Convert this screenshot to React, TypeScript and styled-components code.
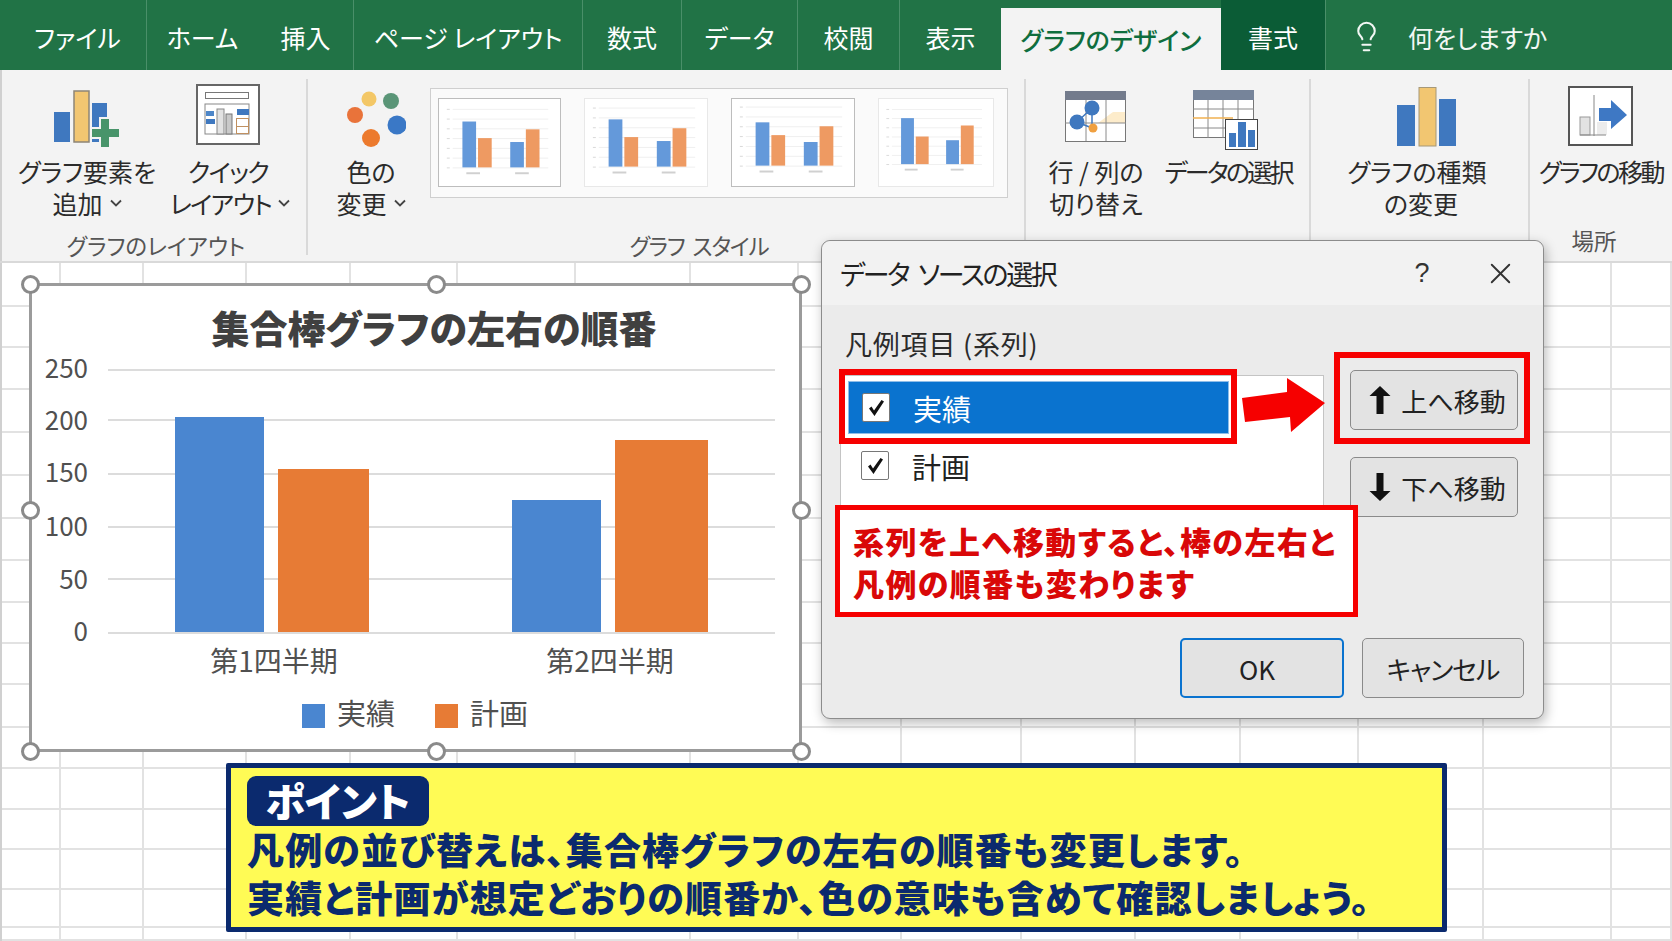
import React from "react";
import styled, { createGlobalStyle } from "styled-components";
import { Lightbulb, X } from "lucide-react";

const GlobalStyle = createGlobalStyle`
  html, body {
    margin: 0;
    padding: 0;
    background: #fff;
    overflow: hidden;
  }
  * {
    box-sizing: border-box;
  }
  body {
    font-family: "Noto Sans CJK JP", "Noto Sans", sans-serif;
    font-feature-settings: "palt";
    color: #262626;
  }
`;

type TabData = {
  label: string;
  width: number;
  noLine?: boolean;
  kind?: "active" | "dark";
  inset?: number;
};

const tabs: TabData[] = [
  { label: "ファイル", width: 147, inset: 9 },
  { label: "ホーム", width: 111, noLine: true },
  { label: "挿入", width: 96 },
  { label: "ページ レイアウト", width: 229 },
  { label: "数式", width: 99 },
  { label: "データ", width: 116 },
  { label: "校閲", width: 102 },
  { label: "表示", width: 101, noLine: true },
  { label: "グラフのデザイン", width: 220, kind: "active" },
  { label: "書式", width: 104, kind: "dark" },
];

const columnWidths = [59, 83, 103, 104, 107, 118, 115, 108, 103, 120, 114, 105, 118, 125, 128, 60];
const rowHeights = [44, 41, 42, 43, 43, 43, 42, 42, 41, 41, 43, 41, 41, 40, 40, 38, 13];

const thumbs = [
  { width: 123, base: 69, tops: [22, 39, 43, 30], strong: true },
  { width: 124, base: 68, tops: [20, 38, 42, 29], strong: false },
  { width: 124, base: 67, tops: [23, 36, 43, 27], strong: true },
  { width: 116, base: 67, tops: [17, 37, 41, 25], strong: false },
];

const handles = [
  [-2, -2],
  [404, -2],
  [769, -2],
  [-2, 224],
  [769, 224],
  [-2, 465],
  [404, 465],
  [769, 465],
];

const Page = styled.div`
  width: 1672px;
  height: 941px;
  display: flex;
  flex-direction: column;
  position: relative;
  overflow: hidden;
`;

const TabBar = styled.div`
  height: 70px;
  flex: none;
  display: flex;
  background: #217346;
`;

const Tab = styled.div<{ $width: number; $noLine?: boolean; $kind?: string; $inset?: number }>`
  width: ${(p) => p.$width}px;
  display: flex;
  align-items: center;
  justify-content: center;
  padding-top: ${(p) => (p.$kind === "active" ? "0" : "3px")};
  padding-left: ${(p) => p.$inset ?? 0}px;
  font-size: 25px;
  font-weight: ${(p) => (p.$kind === "active" ? 500 : 400)};
  white-space: nowrap;
  color: ${(p) => (p.$kind === "active" ? "#0f6e3e" : "#fff")};
  background: ${(p) =>
    p.$kind === "active" ? "#f3f3f3" : p.$kind === "dark" ? "#0b5c36" : "transparent"};
  margin-top: ${(p) => (p.$kind === "active" ? "8px" : "0")};
  border-right: ${(p) => (p.$noLine || p.$kind ? "0" : "1px solid #4a8f69")};
`;

const SearchTab = styled.div`
  display: flex;
  align-items: center;
  padding: 3px 0 0 24px;
  gap: 25px;
  font-size: 25px;
  color: #f2f7f4;
  border-left: 1px solid #4a8f69;
`;

const Ribbon = styled.div`
  height: 193px;
  flex: none;
  display: flex;
  padding: 9px 0 6px;
  background: #f3f3f3;
  border-bottom: 2px solid #d9d9d9;
  box-shadow: inset 2px 0 #d0d0d0;
`;

const RibbonGroup = styled.div<{ $width: number; $pad?: number; $last?: boolean }>`
  width: ${(p) => p.$width}px;
  flex: none;
  display: flex;
  flex-direction: column;
  padding-left: ${(p) => p.$pad ?? 0}px;
  border-right: ${(p) => (p.$last ? "0" : "2px solid #d9d9d9")};
`;

const GroupRow = styled.div`
  display: flex;
  align-items: flex-start;
`;

const GroupLabel = styled.div<{ $shift?: number; $lift?: number; $tight?: number }>`
  margin-top: auto;
  margin-bottom: ${(p) => p.$lift ?? 0}px;
  height: 22px;
  line-height: 22px;
  text-align: center;
  font-size: 22.5px;
  letter-spacing: ${(p) => p.$tight ?? 0}px;
  word-spacing: 4px;
  color: #555;
  white-space: nowrap;
  transform: translate(${(p) => p.$shift ?? 0}px, 1px);
`;

const RibbonButton = styled.div<{ $width: number }>`
  width: ${(p) => p.$width}px;
  flex: none;
  padding-top: 1px;
  display: flex;
  flex-direction: column;
  align-items: center;
`;

const IconSlot = styled.div<{ $dx?: number; $dy?: number }>`
  height: 74px;
  margin-bottom: 1px;
  display: flex;
  align-items: center;
  justify-content: center;
  transform: translate(${(p) => p.$dx ?? 0}px, ${(p) => p.$dy ?? 0}px);
`;

const ButtonLine = styled.div<{ $tight?: number; $dx?: number }>`
  height: 32px;
  line-height: 32px;
  font-size: 25px;
  letter-spacing: ${(p) => p.$tight ?? 0}px;
  white-space: nowrap;
  display: flex;
  align-items: center;
  gap: 7px;
  color: #2b2b2b;
  transform: translateX(${(p) => p.$dx ?? 0}px);
`;

const Gallery = styled.div`
  margin-top: 9px;
  width: 578px;
  height: 110px;
  flex: none;
  display: flex;
  gap: 23px;
  padding: 9px 0 0 7px;
  background: #fafafa;
  border: 1px solid #cfcfcf;
`;

const Thumb = styled.div<{ $width: number; $strong: boolean }>`
  width: ${(p) => p.$width}px;
  height: 89px;
  flex: none;
  background: #fff;
  border: 1px solid ${(p) => (p.$strong ? "#bdbdbd" : "#e8e8e8")};
`;

const Sheet = styled.div`
  flex: 1;
  position: relative;
  background: #fff;
  border-left: 2px solid #d0d0d0;
`;

const CellGrid = styled.div`
  display: grid;
  grid-template-columns: ${columnWidths.map((w) => `${w}px`).join(" ")};
  grid-template-rows: ${rowHeights.map((h) => `${h}px`).join(" ")};
`;

const Cell = styled.div`
  border-right: 2px solid #e2e2e2;
  border-bottom: 2px solid #e2e2e2;
`;

const ChartFrame = styled.div`
  position: absolute;
  left: 27px;
  top: 20px;
  width: 773px;
  height: 469px;
  background: #fff;
  border: 3px solid #9b9b9b;
`;

const Handle = styled.div<{ $x: number; $y: number }>`
  position: absolute;
  left: ${(p) => p.$x}px;
  top: ${(p) => p.$y}px;
  width: 19px;
  height: 19px;
  margin: -9.5px 0 0 -9.5px;
  border-radius: 50%;
  background: #fff;
  border: 3px solid #8a8a8a;
`;

const ChartTitle = styled.text`
  font-size: 38px;
  font-weight: 900;
  fill: #404040;
  text-anchor: middle;
`;

const AxisLabel = styled.text`
  font-size: 26px;
  fill: #505050;
  text-anchor: end;
`;

const CategoryLabel = styled.text`
  font-size: 28px;
  fill: #505050;
  text-anchor: middle;
`;

const LegendLabel = styled.text`
  font-size: 29px;
  fill: #505050;
`;

const Dialog = styled.div`
  position: absolute;
  left: 819px;
  top: -23px;
  width: 723px;
  height: 479px;
  display: flex;
  flex-direction: column;
  background: #ebebeb;
  border: 1px solid #8c8c8c;
  border-radius: 9px;
  box-shadow: 2px 4px 12px rgba(0, 0, 0, 0.28);
`;

const DialogHead = styled.div`
  height: 64px;
  flex: none;
  display: flex;
  align-items: center;
  padding: 0 25px 0 18px;
  background: #f2f2f2;
  border-radius: 9px 9px 0 0;
`;

const DialogTitle = styled.div`
  flex: 1;
  font-size: 27px;
  letter-spacing: -2.4px;
  word-spacing: 6px;
  color: #222;
  white-space: nowrap;
`;

const HelpMark = styled.div`
  width: 30px;
  text-align: center;
  font-size: 27px;
  margin: 0 46px 0 0;
  color: #333;
  font-family: "Liberation Sans", sans-serif;
`;

const DialogBody = styled.div`
  padding: 22px 0 0 18px;
`;

const FieldLabel = styled.div`
  height: 34px;
  line-height: 34px;
  padding-left: 5px;
  margin-bottom: 9px;
  font-size: 27px;
  letter-spacing: 0.8px;
  color: #2b2b2b;
`;

const ListRow = styled.div`
  display: flex;
  align-items: flex-start;
`;

const SeriesList = styled.div`
  width: 484px;
  height: 140px;
  margin-top: 5px;
  padding: 5px 0 0 7px;
  background: #fff;
  border: 1px solid #c4c4c4;
`;

const SeriesRow = styled.div<{ $selected?: boolean }>`
  width: 381px;
  height: 53px;
  margin-bottom: 5px;
  display: flex;
  align-items: center;
  gap: 23px;
  padding-left: 13px;
  font-size: 29px;
  color: ${(p) => (p.$selected ? "#fff" : "#222")};
  background: ${(p) => (p.$selected ? "#0a73cf" : "transparent")};
  border: ${(p) => (p.$selected ? "1px solid #8fbde8" : "0")};
`;

const CheckBox = styled.div`
  width: 28px;
  height: 29px;
  flex: none;
  display: flex;
  align-items: center;
  justify-content: center;
  background: #fff;
  border: 1px solid #777;
  border-radius: 2px;
`;

const MoveColumn = styled.div`
  margin-left: 26px;
  display: flex;
  flex-direction: column;
  gap: 27px;
`;

const DialogButton = styled.div<{ $width: number; $primary?: boolean; $tight?: number; $nudge?: number; $push?: number }>`
  width: ${(p) => p.$width}px;
  height: 60px;
  display: flex;
  align-items: center;
  justify-content: center;
  gap: 9px;
  padding-left: ${(p) => p.$push ?? 0}px;
  padding-right: ${(p) => p.$nudge ?? 0}px;
  font-size: 26px;
  letter-spacing: ${(p) => p.$tight ?? 0}px;
  color: #222;
  background: #e3e3e3;
  border: ${(p) => (p.$primary ? "2px solid #0a73cf" : "1px solid #8a8a8a")};
  border-radius: 5px;
`;

const DialogFoot = styled.div`
  margin-top: auto;
  padding: 0 19px 20px 0;
  display: flex;
  justify-content: flex-end;
  gap: 18px;
`;

const RedFrame = styled.div<{ $x: number; $y: number; $w: number; $h: number }>`
  position: absolute;
  left: ${(p) => p.$x}px;
  top: ${(p) => p.$y}px;
  width: ${(p) => p.$w}px;
  height: ${(p) => p.$h}px;
  border: 6px solid #f60000;
`;

const RedArrow = styled.svg`
  position: absolute;
  left: 420px;
  top: 137px;
`;

const Callout = styled.div`
  position: absolute;
  left: 13px;
  top: 264px;
  width: 523px;
  height: 112px;
  padding: 10px 0 0 13px;
  background: #fff;
  border: 5px solid #f60000;
  font-size: 31px;
  font-weight: 900;
  letter-spacing: 1.4px;
  line-height: 42px;
  color: #d90808;
  white-space: nowrap;
`;

const Note = styled.div`
  position: absolute;
  left: 224px;
  top: 500px;
  width: 1221px;
  height: 169px;
  padding: 8px 0 0 16px;
  background: #fffb55;
  border: 5px solid #0b2a6e;
  border-radius: 2px;
`;

const NoteBadge = styled.div`
  width: 182px;
  height: 50px;
  margin-bottom: -1px;
  padding-bottom: 2px;
  display: flex;
  align-items: center;
  justify-content: center;
  background: #0b2a6e;
  border-radius: 9px;
  color: #fff;
  font-size: 40px;
  font-weight: 900;
`;

const NoteLine = styled.div`
  height: 48px;
  line-height: 48px;
  font-size: 37px;
  font-weight: 900;
  letter-spacing: 1.15px;
  color: #0b2a6e;
  white-space: nowrap;
`;

const Chevron = () => (
  <svg width="12" height="8" viewBox="0 0 12 8">
    <path d="M1 1.5 6 6.5 11 1.5" fill="none" stroke="#444" strokeWidth="1.8" />
  </svg>
);

const CheckMark = () => (
  <svg width="20" height="20" viewBox="0 0 20 20">
    <path d="M3 10.5 5.5 8.5 8 12.5 15.5 2 18 3.5 8.5 18z" fill="#111" />
  </svg>
);

const AddElementIcon = () => (
  <svg width="68" height="62" viewBox="54 88 68 62">
    <rect x="54" y="112" width="16" height="30" fill="#3f78bf" />
    <rect x="74" y="91" width="15" height="51" fill="#f2c671" stroke="#8d8577" strokeWidth="1.5" />
    <rect x="92" y="103" width="15" height="39" fill="#3f78bf" />
    <path d="M100 118h10v10h10v10h-10v10h-10v-10H91v-10h9z" fill="#48946a" stroke="#f3f3f3" strokeWidth="2" />
  </svg>
);

const QuickLayoutIcon = () => (
  <svg width="64" height="61" viewBox="197 83 64 61">
    <rect x="198" y="84" width="62" height="59" fill="#fff" stroke="#666" strokeWidth="2" />
    <rect x="206.5" y="91.5" width="43" height="6" fill="#fff" stroke="#777" />
    <rect x="206" y="103" width="44" height="30" fill="none" stroke="#888" />
    <rect x="207" y="110" width="8" height="5" fill="#4d86c8" />
    <rect x="207" y="118" width="9" height="5" fill="#3f78bf" />
    <rect x="218" y="108" width="7" height="25" fill="#e2e2e2" stroke="#888" />
    <rect x="227" y="113" width="6" height="20" fill="#c9c9c9" stroke="#777" />
    <rect x="238" y="108" width="12" height="6" fill="#3f78bf" />
    <rect x="237.5" y="117.5" width="12" height="8" fill="#fff" stroke="#c09060" />
    <rect x="237.5" y="125.5" width="12" height="7" fill="#fff" stroke="#c09060" />
  </svg>
);

const ColorIcon = () => (
  <svg width="66" height="62" viewBox="340 86 66 62">
    <circle cx="369" cy="98" r="7.5" fill="#f3c766" />
    <circle cx="391" cy="100" r="8" fill="#5a9577" />
    <circle cx="355" cy="114" r="8" fill="#e9733a" />
    <circle cx="397" cy="124" r="9.5" fill="#3a78c6" />
    <circle cx="371" cy="137" r="9" fill="#ec7a2d" />
  </svg>
);

const SwitchIcon = () => (
  <svg width="62" height="52" viewBox="1064 91 62 52">
    <rect x="1064.5" y="91.5" width="60" height="50" fill="#fff" stroke="#777" />
    <path d="M1097 123 1112 112H1124V123z" fill="#fdeccb" />
    <rect x="1064" y="91" width="61" height="9" fill="#737b8c" />
    <path d="M1085 100v41M1105 100v41M1064 123h61" stroke="#8a8a8a" strokeWidth="1" fill="none" />
    <path d="M1076 122 1091 108M1091 108V128M1076 122 1091 128" stroke="#3f78bf" strokeWidth="1.5" />
    <circle cx="1091" cy="108" r="7.5" fill="#3f78bf" />
    <circle cx="1076" cy="122" r="7.5" fill="#3f78bf" />
    <circle cx="1092" cy="128" r="4.5" fill="#f0a040" />
  </svg>
);

const DataSelectIcon = () => (
  <svg width="66" height="61" viewBox="1193 90 66 61">
    <rect x="1193.5" y="90.5" width="60" height="47" fill="#fff" stroke="#777" />
    <rect x="1193" y="90" width="61" height="10" fill="#76849a" />
    <path d="M1208 100v38M1223 100v38M1238 100v38M1193 109h61M1193 128h61" stroke="#8a8a8a" fill="none" />
    <path d="M1193 118h40" stroke="#f0b050" strokeWidth="1.5" />
    <rect x="1225.5" y="119.5" width="32" height="30" fill="#fff" stroke="#444" />
    <rect x="1229" y="133" width="7" height="14" fill="#3f78bf" />
    <rect x="1238" y="122" width="8" height="25" fill="#3f78bf" />
    <rect x="1248" y="130" width="7" height="17" fill="#3f78bf" />
  </svg>
);

const ChartTypeIcon = () => (
  <svg width="60" height="60" viewBox="1397 88 60 60">
    <rect x="1397" y="106" width="18" height="41" fill="#3f78bf" />
    <rect x="1419" y="88.5" width="17" height="58.5" fill="#f2c671" stroke="#a69878" />
    <rect x="1439" y="100" width="17" height="47" fill="#3f78bf" />
  </svg>
);

const MoveChartIcon = () => (
  <svg width="66" height="61" viewBox="1567 86 66 61">
    <rect x="1568" y="87" width="63" height="58" fill="#fff" stroke="#555" strokeWidth="2" />
    <rect x="1579" y="117" width="10" height="18" fill="#e2e2e2" stroke="#999" />
    <rect x="1596" y="122" width="10" height="13" fill="#ececec" />
    <path d="M1593 95v41M1579 135h26" stroke="#888" fill="none" />
    <path d="M1598 108h12v-8l16 15-16 14v-8h-12z" fill="#3e78c4" />
  </svg>
);

const BarThumb = ({ base, tops }: { base: number; tops: number[] }) => {
  const xs = [24, 40, 73, 89];
  return (
    <svg width="100%" height="100%" viewBox="0 0 124 87">
      {[0, 1, 2, 3, 4, 5, 6].map((i) => (
        <rect key={i} x="14" y={base - i * 10} width="98" height="1" fill="#efefef" />
      ))}
      {[0, 1, 2, 3, 4, 5, 6].map((i) => (
        <rect key={i} x="8" y={base - i * 10} width="3" height="1" fill="#d8d8d8" />
      ))}
      {tops.map((top, i) => (
        <rect key={i} x={xs[i]} y={top} width="14" height={base - top} fill={i % 2 ? "#ee9a62" : "#6499da"} />
      ))}
      <rect x="28" y={base + 5} width="14" height="2" fill="#d0d0d0" />
      <rect x="78" y={base + 5} width="14" height="2" fill="#d0d0d0" />
    </svg>
  );
};

const MoveArrow = ({ down }: { down?: boolean }) => (
  <svg width="24" height="30" viewBox="0 0 24 30">
    <path
      d={down ? "M8.5 1h7v18h7L12 29 1.5 19h7z" : "M8.5 29h7V11h7L12 1 1.5 11h7z"}
      fill="#111"
    />
  </svg>
);

export default function App() {
  return (
    <Page>
      <GlobalStyle />
      <TabBar>
        {tabs.map((tab) => (
          <Tab key={tab.label} $width={tab.width} $noLine={tab.noLine} $kind={tab.kind} $inset={tab.inset}>
            {tab.label}
          </Tab>
        ))}
        <SearchTab>
          <Lightbulb size={33} strokeWidth={1.5} />
          何をしますか
        </SearchTab>
      </TabBar>

      <Ribbon>
        <RibbonGroup $width={308} $pad={12}>
          <GroupRow>
            <RibbonButton $width={150}>
              <IconSlot $dx={1} $dy={2}>
                <AddElementIcon />
              </IconSlot>
              <ButtonLine>グラフ要素を</ButtonLine>
              <ButtonLine>
                追加 <Chevron />
              </ButtonLine>
            </RibbonButton>
            <RibbonButton $width={132}>
              <IconSlot $dy={-3}>
                <QuickLayoutIcon />
              </IconSlot>
              <ButtonLine $tight={-1.5}>クイック</ButtonLine>
              <ButtonLine $tight={-1.5} $dx={2}>
                レイアウト
                <Chevron />
              </ButtonLine>
            </RibbonButton>
          </GroupRow>
          <GroupLabel $shift={-3}>グラフのレイアウト</GroupLabel>
        </RibbonGroup>

        <RibbonGroup $width={718} $pad={4}>
          <GroupRow>
            <RibbonButton $width={118}>
              <IconSlot $dx={2} $dy={1}>
                <ColorIcon />
              </IconSlot>
              <ButtonLine>色の</ButtonLine>
              <ButtonLine>
                変更 <Chevron />
              </ButtonLine>
            </RibbonButton>
            <Gallery>
              {thumbs.map((thumb) => (
                <Thumb key={thumb.width + thumb.base} $width={thumb.width} $strong={thumb.strong}>
                  <BarThumb base={thumb.base} tops={thumb.tops} />
                </Thumb>
              ))}
            </Gallery>
          </GroupRow>
          <GroupLabel $shift={31} $tight={-1.2}>グラフ スタイル</GroupLabel>
        </RibbonGroup>

        <RibbonGroup $width={285} $pad={4}>
          <GroupRow>
            <RibbonButton $width={132}>
              <IconSlot>
                <SwitchIcon />
              </IconSlot>
              <ButtonLine>行 / 列の</ButtonLine>
              <ButtonLine>切り替え</ButtonLine>
            </RibbonButton>
            <RibbonButton $width={132}>
              <IconSlot $dx={-2} $dy={3}>
                <DataSelectIcon />
              </IconSlot>
              <ButtonLine $tight={-2.8}>データの選択</ButtonLine>
            </RibbonButton>
          </GroupRow>
        </RibbonGroup>

        <RibbonGroup $width={219}>
          <GroupRow>
            <RibbonButton $width={212}>
              <IconSlot $dx={10}>
                <ChartTypeIcon />
              </IconSlot>
              <ButtonLine>グラフの種類</ButtonLine>
              <ButtonLine $dx={4}>の変更</ButtonLine>
            </RibbonButton>
          </GroupRow>
        </RibbonGroup>

        <RibbonGroup $width={142} $last>
          <GroupRow>
            <RibbonButton $width={142}>
              <IconSlot $dy={-1}>
                <MoveChartIcon />
              </IconSlot>
              <ButtonLine $tight={-2.5}>グラフの移動</ButtonLine>
            </RibbonButton>
          </GroupRow>
          <GroupLabel $lift={5} $shift={-7}>場所</GroupLabel>
        </RibbonGroup>
      </Ribbon>

      <Sheet>
        <CellGrid>
          {Array.from({ length: columnWidths.length * rowHeights.length }).map((_, i) => (
            <Cell key={i} />
          ))}
        </CellGrid>

        <ChartFrame>
          <svg width="767" height="463" viewBox="32 286 767 463">
            <ChartTitle x="434" y="343">集合棒グラフの左右の順番</ChartTitle>
            {[370, 420, 474, 527, 579, 633].map((y) => (
              <rect key={y} x="108" y={y - 1} width="667" height="2" fill="#dcdcdc" />
            ))}
            {[
              ["250", 378],
              ["200", 430],
              ["150", 482],
              ["100", 536],
              ["50", 589],
              ["0", 641],
            ].map(([label, y]) => (
              <AxisLabel key={label} x="88" y={y}>{label}</AxisLabel>
            ))}
            <rect x="175" y="417" width="89" height="215" fill="#4a86d0" />
            <rect x="278" y="469" width="91" height="163" fill="#e77b35" />
            <rect x="512" y="500" width="89" height="132" fill="#4a86d0" />
            <rect x="615" y="440" width="93" height="192" fill="#e77b35" />
            <CategoryLabel x="274" y="672">第1四半期</CategoryLabel>
            <CategoryLabel x="610" y="672">第2四半期</CategoryLabel>
            <rect x="302" y="704" width="23" height="24" fill="#4a86d0" />
            <LegendLabel x="337" y="725">実績</LegendLabel>
            <rect x="435" y="704" width="23" height="24" fill="#e77b35" />
            <LegendLabel x="470" y="725">計画</LegendLabel>
          </svg>
          {handles.map(([x, y]) => (
            <Handle key={`${x}-${y}`} $x={x} $y={y} />
          ))}
        </ChartFrame>

        <Dialog>
          <DialogHead>
            <DialogTitle>データ ソースの選択</DialogTitle>
            <HelpMark>?</HelpMark>
            <X size={35} strokeWidth={1.3} color="#333" />
          </DialogHead>
          <DialogBody>
            <FieldLabel>凡例項目 (系列)</FieldLabel>
            <ListRow>
              <SeriesList>
                <SeriesRow $selected>
                  <CheckBox>
                    <CheckMark />
                  </CheckBox>
                  実績
                </SeriesRow>
                <SeriesRow>
                  <CheckBox>
                    <CheckMark />
                  </CheckBox>
                  計画
                </SeriesRow>
              </SeriesList>
              <MoveColumn>
                <DialogButton $width={168} $push={6}>
                  <MoveArrow />
                  上へ移動
                </DialogButton>
                <DialogButton $width={168} $push={6}>
                  <MoveArrow down />
                  下へ移動
                </DialogButton>
              </MoveColumn>
            </ListRow>
          </DialogBody>
          <DialogFoot>
            <DialogButton $width={164} $primary $nudge={10}>OK</DialogButton>
            <DialogButton $width={162} $tight={-1}>キャンセル</DialogButton>
          </DialogFoot>

          <RedFrame $x={17} $y={128} $w={398} $h={75} />
          <RedFrame $x={512} $y={111} $w={196} $h={92} />
          <RedArrow width="83" height="54" viewBox="1242 378 83 54">
            <path d="M1242 398 1287 392 1287 378 1325 403 1291 432 1290 417 1245 422z" fill="#f60000" />
          </RedArrow>
          <Callout>
            系列を上へ移動すると、棒の左右と
            <br />
            凡例の順番も変わります
          </Callout>
        </Dialog>

        <Note>
          <NoteBadge>ポイント</NoteBadge>
          <NoteLine>凡例の並び替えは、集合棒グラフの左右の順番も変更します。</NoteLine>
          <NoteLine>実績と計画が想定どおりの順番か、色の意味も含めて確認しましょう。</NoteLine>
        </Note>
      </Sheet>
    </Page>
  );
}
